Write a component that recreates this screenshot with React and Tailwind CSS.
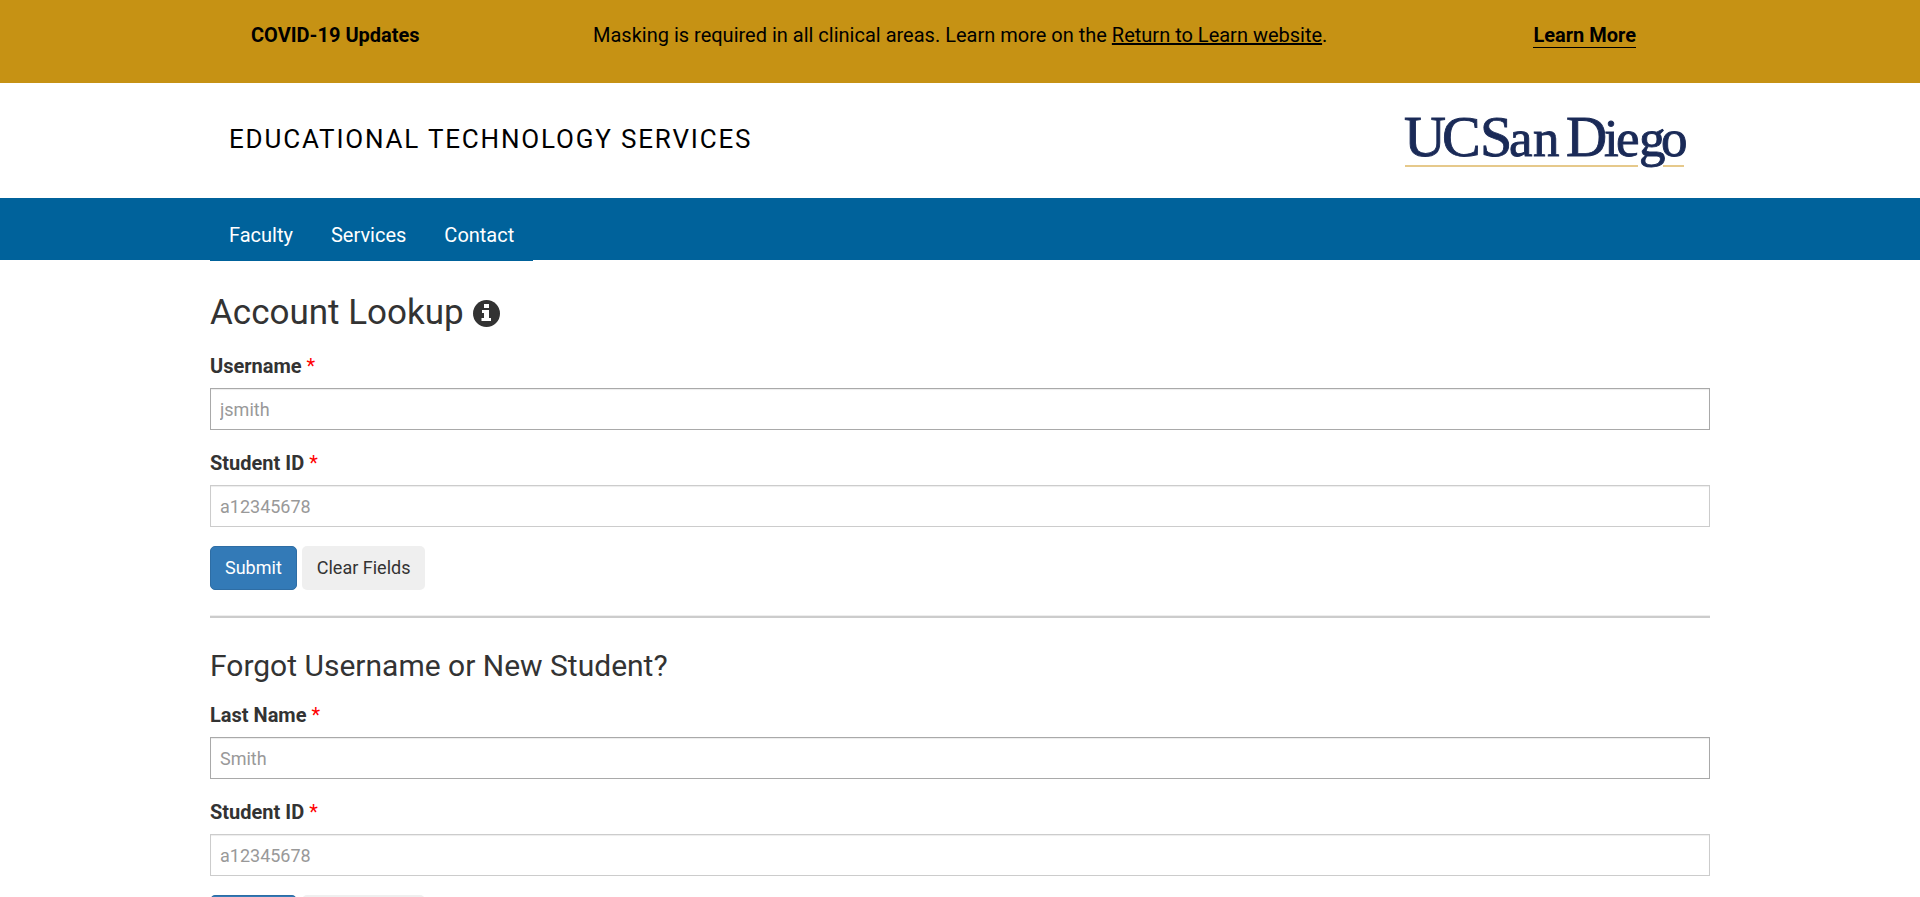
import React from "react";

const navItems = ["Faculty", "Services", "Contact"];

function Logo() {
  return (
    <svg width="282" height="64" viewBox="0 0 282 64" role="img" aria-label="UC San Diego" className="overflow-visible">
      <g fontFamily="'Liberation Serif', serif" fontSize="53" fill="#1a2a57" stroke="#1a2a57" strokeWidth="0.9">
        <text y="49">
          <tspan x="-1 37" fontSize="58">UC</tspan>
          <tspan x="75" fontSize="58">S</tspan>
          <tspan x="104 128">an</tspan>
          <tspan x="161" fontSize="57">D</tspan>
          <tspan x="199 211 234 256">iego</tspan>
        </text>
      </g>
      <path d="M0 59H233M258 59H279" stroke="#e6c98b" strokeWidth="2" />
    </svg>
  );
}

function InfoIcon() {
  return (
    <svg viewBox="0 0 27 27" className="size-[27px]" aria-hidden="true">
      <circle cx="13.5" cy="13.5" r="13.5" fill="currentColor" />
      <path fill="#fff" d="M11 4h5v4h-5zM9 10h7v8h2v3H8.500v-3H11v-5H9z" />
    </svg>
  );
}

function Field({ id, label, placeholder, strong }) {
  return (
    <div className="mb-[19px]">
      <label htmlFor={id} className="mb-2 block text-xl leading-7 font-bold">
        {label} <span className="font-normal text-[#ff0000]">*</span>
      </label>
      <input
        id={id}
        type="text"
        placeholder={placeholder}
        className={
          "block h-[42px] w-full border bg-white px-[9px] text-lg text-[#555] shadow-[inset_0_1px_1px_rgba(0,0,0,0.075)] outline-none placeholder:text-[#999] " +
          (strong ? "border-[#a9a9a9]" : "border-[#ccc]")
        }
      />
    </div>
  );
}

function Actions() {
  return (
    <div className="flex gap-[5px]">
      <button type="submit" className="h-11 rounded-[5px] border border-[#2e6da4] bg-[#337ab7] px-[14px] text-lg text-white">
        Submit
      </button>
      <button type="reset" className="h-11 rounded-[5px] bg-[#efefef] px-[15px] text-lg text-[#333]">
        Clear Fields
      </button>
    </div>
  );
}

export default function App() {
  return (
    <div className="h-screen overflow-hidden bg-white font-['Roboto',sans-serif] text-[#333]">
      <aside className="bg-[#c69214] text-black">
        <div className="mx-auto flex h-[83px] max-w-[1500px] text-xl leading-[30px]">
          <strong className="w-1/4 pt-5 pl-[41px] font-bold">COVID-19 Updates</strong>
          <p className="w-1/2 pt-5 pl-2">
            Masking is required in all clinical areas. Learn more on the{" "}
            <a href="#return" className="underline">Return to Learn website</a>.
          </p>
          <div className="w-1/4 pt-5 pr-[74px] text-right">
            <a href="#more" className="border-b border-black font-bold">Learn More</a>
          </div>
        </div>
      </aside>
      <header className="mx-auto flex h-[115px] max-w-[1500px] justify-between px-[19px]">
        <a href="#home" className="self-center pb-1 text-[26px] leading-9 tracking-[0.07em] text-black uppercase">
          Educational Technology Services
        </a>
        <a href="#ucsd" className="pt-6 pr-1">
          <Logo />
        </a>
      </header>
      <nav className="h-[62px] bg-[#00629b]">
        <div className="mx-auto max-w-[1500px]">
          <ul className="flex h-[63px] w-fit bg-[#00629b]">
            {navItems.map((item) => (
              <li key={item}>
                <a href={"#" + item.toLowerCase()} className="block px-[19px] pt-[22px] text-xl leading-[30px] text-white">
                  {item}
                </a>
              </li>
            ))}
          </ul>
        </div>
      </nav>
      <main className="mx-auto max-w-[1500px] pt-7">
        <form>
          <h1 className="mb-[14px] flex items-center gap-[9px] text-[35px] leading-[50px]">
            Account Lookup <InfoIcon />
          </h1>
          <Field id="username" label="Username" placeholder="jsmith" strong />
          <Field id="student-id" label="Student ID" placeholder="a12345678" />
          <Actions />
        </form>
        <hr className="my-[25px] border-t border-b-2 border-t-[#eee] border-b-[#ccc]" />
        <form>
          <h2 className="mb-3 text-[30px] leading-[46px]">Forgot Username or New Student?</h2>
          <Field id="last-name" label="Last Name" placeholder="Smith" strong />
          <Field id="new-student-id" label="Student ID" placeholder="a12345678" />
          <Actions />
        </form>
      </main>
    </div>
  );
}
